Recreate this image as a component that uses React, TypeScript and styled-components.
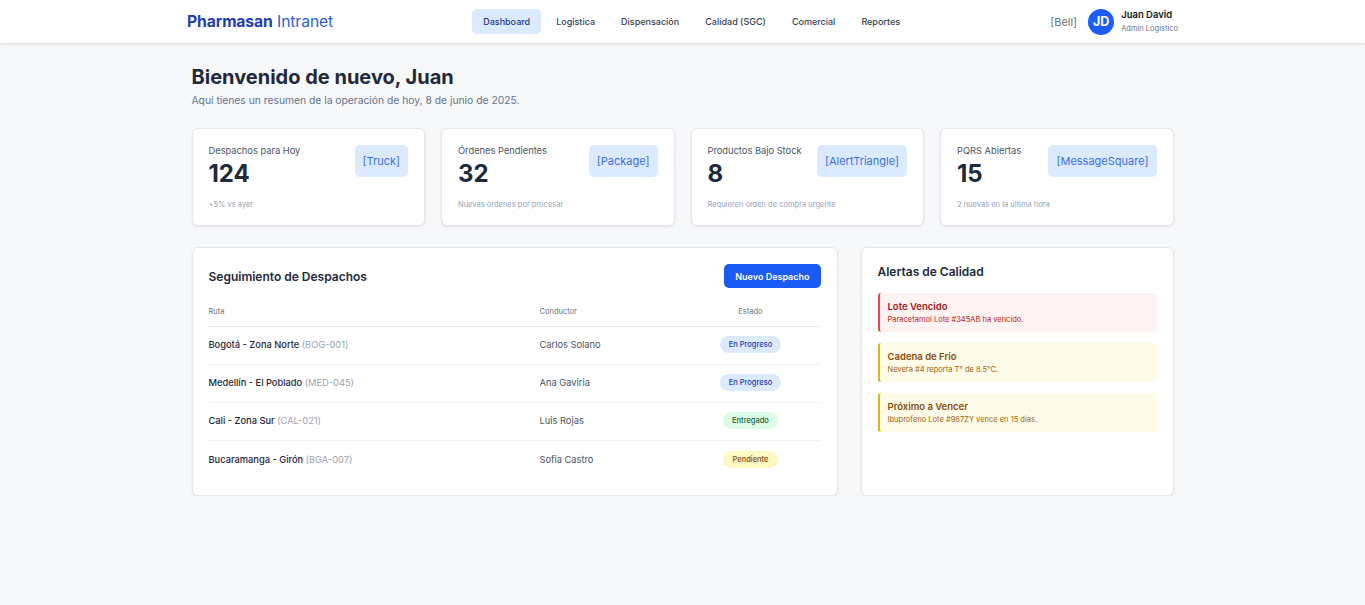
import React from "react";
import styled, { createGlobalStyle } from "styled-components";

const Global = createGlobalStyle`
  * { box-sizing: border-box; }
  body { margin: 0; background: #f7f8fa; font-family: Inter, "Noto Sans", sans-serif; color: #1e293b; }
`;

const Header = styled.header`
  height: 43px;
  background: #fff;
  box-shadow: 0 1px 3px rgba(0,0,0,0.12);
  display: flex;
  justify-content: center;
`;
const HeaderInner = styled.div`
  width: 991px;
  display: flex;
  align-items: center;
  justify-content: space-between;
`;
const Logo = styled.div`
  font-size: 15.7px;
  color: #1e40af;
  letter-spacing: -0.1px;
  b { font-weight: 700; }
  span { font-weight: 400; color: #2f5fd0; }
`;
const Nav = styled.nav`
  display: flex;
  gap: 4px;
`;
const NavItem = styled.a<{ $active?: boolean }>`
  font-size: 9px;
  font-weight: 500;
  padding: 7px 11px;
  border-radius: 5px;
  color: ${(p) => (p.$active ? "#1e3a8a" : "#374151")};
  background: ${(p) => (p.$active ? "#dbeafe" : "transparent")};
`;
const Right = styled.div`
  display: flex;
  align-items: center;
  gap: 11px;
`;
const Bell = styled.span`
  font-size: 11px;
  color: #6b7280;
`;
const User = styled.div`
  display: flex;
  align-items: center;
  gap: 7px;
`;
const Avatar = styled.div`
  width: 26px;
  height: 26px;
  border-radius: 50%;
  background: #1d5cf5;
  color: #fff;
  font-weight: 700;
  font-size: 12.5px;
  display: flex;
  align-items: center;
  justify-content: center;
`;
const UserText = styled.div`
  display: flex;
  flex-direction: column;
  margin-top: -1px;
  b { font-size: 9.5px; font-weight: 600; color: #111827; line-height: 14px; }
  span { font-size: 7.5px; color: #6b7280; line-height: 12px; margin-top: 1px; }
`;

const Main = styled.main`
  width: 982px;
  margin: 0 auto;
  padding-top: 20px;
`;
const Title = styled.h1`
  margin: 0;
  font-size: 20px;
  font-weight: 700;
  line-height: 28px;
  color: #1e293b;
`;
const Subtitle = styled.p`
  margin: 3px 0 0;
  font-size: 10.3px;
  color: #64748b;
`;
const StatsGrid = styled.div`
  margin-top: 22px;
  display: grid;
  grid-template-columns: repeat(4, 1fr);
  gap: 16px;
`;
const Card = styled.div`
  background: #fff;
  border: 1px solid #e5e7eb;
  border-radius: 6px;
  box-shadow: 0 1px 3px rgba(0,0,0,0.08);
  padding: 16px;
`;
const StatTop = styled.div`
  display: flex;
  justify-content: space-between;
  align-items: flex-start;
`;
const StatLabel = styled.div`
  font-size: 9.3px;
  color: #4b5563;
`;
const StatValue = styled.div`
  font-size: 24px;
  font-weight: 700;
  color: #1e293b;
  line-height: 30px;
  margin-top: 3px;
`;
const IconBox = styled.div`
  background: #dbeafe;
  color: #3b6fe8;
  font-size: 11px;
  border-radius: 5px;
  padding: 0 8px;
  height: 32px;
  display: flex;
  align-items: center;
`;
const StatSub = styled.div`
  font-size: 7.5px;
  color: #94a3b8;
  margin-top: 11px;
`;

const Lower = styled.div`
  margin-top: 21px;
  display: grid;
  grid-template-columns: 646px minmax(0, 1fr);
  gap: 23px;
`;
const PanelHead = styled.div`
  display: flex;
  justify-content: space-between;
  align-items: center;
`;
const PanelTitle = styled.h2`
  margin: 0;
  font-size: 12px;
  font-weight: 600;
  color: #1e293b;
`;
const Button = styled.button`
  background: #1a5af5;
  color: #fff;
  border: none;
  border-radius: 5px;
  font-family: inherit;
  font-size: 9px;
  font-weight: 600;
  height: 24px;
  padding: 0 11px;
`;
const Table = styled.div`
  margin-top: 16px;
`;
const Row = styled.div<{ $head?: boolean }>`
  display: grid;
  grid-template-columns: 331px 141px 1fr;
  align-items: center;
  height: ${(p) => (p.$head ? "23px" : "38px")};
  padding-bottom: ${(p) => (p.$head ? "0" : "2px")};
  border-bottom: 1px solid ${(p) => (p.$head ? "#e2e8f0" : "#f1f3f5")};
  &:last-child { border-bottom: none; }
`;
const HeadCell = styled.div<{ $center?: boolean }>`
  font-size: 7.5px;
  color: #6b7280;
  text-align: ${(p) => (p.$center ? "center" : "left")};
  padding-bottom: 7px;
`;
const RouteCell = styled.div`
  font-size: 9.3px;
  font-weight: 500;
  color: #1e293b;
  span { color: #9ca3af; font-weight: 400; }
`;
const DriverCell = styled.div`
  font-size: 9.3px;
  color: #4b5563;
`;
const BadgeCell = styled.div`
  display: flex;
  justify-content: center;
`;
const badgeColors: Record<string, [string, string]> = {
  blue: ["#dbeafe", "#1e40af"],
  green: ["#dcfce7", "#166534"],
  yellow: ["#fef9c3", "#854d0e"],
};
const Badge = styled.span<{ $tone: string }>`
  font-size: 7.5px;
  font-weight: 500;
  padding: 4px 9px;
  border-radius: 999px;
  background: ${(p) => badgeColors[p.$tone][0]};
  color: ${(p) => badgeColors[p.$tone][1]};
`;

const AlertList = styled.div`
  margin-top: 14px;
  display: flex;
  flex-direction: column;
  gap: 11px;
`;
const alertColors: Record<string, [string, string, string, string]> = {
  red: ["#fef2f2", "#ef4444", "#991b1b", "#b91c1c"],
  yellow: ["#fefce8", "#eab308", "#854d0e", "#a16207"],
};
const Alert = styled.div<{ $tone: string }>`
  background: ${(p) => alertColors[p.$tone][0]};
  border-left: 2px solid ${(p) => alertColors[p.$tone][1]};
  border-radius: 3px;
  padding: 8px 8px;
  height: 39px;
  b { display: block; font-size: 9.5px; font-weight: 600; color: ${(p) => alertColors[p.$tone][2]}; }
  span { display: block; font-size: 7.5px; color: ${(p) => alertColors[p.$tone][3]}; margin-top: 3px; }
`;

const stats = [
  { label: "Despachos para Hoy", value: "124", icon: "[Truck]", sub: "+5% vs ayer" },
  { label: "Órdenes Pendientes", value: "32", icon: "[Package]", sub: "Nuevas órdenes por procesar" },
  { label: "Productos Bajo Stock", value: "8", icon: "[AlertTriangle]", sub: "Requieren orden de compra urgente" },
  { label: "PQRS Abiertas", value: "15", icon: "[MessageSquare]", sub: "2 nuevas en la última hora" },
];

const rows = [
  { route: "Bogotá - Zona Norte", code: "(BOG-001)", driver: "Carlos Solano", status: "En Progreso", tone: "blue" },
  { route: "Medellín - El Poblado", code: "(MED-045)", driver: "Ana Gaviria", status: "En Progreso", tone: "blue" },
  { route: "Cali - Zona Sur", code: "(CAL-021)", driver: "Luis Rojas", status: "Entregado", tone: "green" },
  { route: "Bucaramanga - Girón", code: "(BGA-007)", driver: "Sofia Castro", status: "Pendiente", tone: "yellow" },
];

const alerts = [
  { title: "Lote Vencido", text: "Paracetamol Lote #345AB ha vencido.", tone: "red" },
  { title: "Cadena de Frío", text: "Nevera #4 reporta T° de 8.5°C.", tone: "yellow" },
  { title: "Próximo a Vencer", text: "Ibuprofeno Lote #987ZY vence en 15 días.", tone: "yellow" },
];

export default function App() {
  return (
    <>
      <Global />
      <Header>
        <HeaderInner>
          <Logo><b>Pharmasan</b> <span>Intranet</span></Logo>
          <Nav>
            <NavItem $active>Dashboard</NavItem>
            <NavItem>Logistica</NavItem>
            <NavItem>Dispensación</NavItem>
            <NavItem>Calidad (SGC)</NavItem>
            <NavItem>Comercial</NavItem>
            <NavItem>Reportes</NavItem>
          </Nav>
          <Right>
            <Bell>[Bell]</Bell>
            <User>
              <Avatar>JD</Avatar>
              <UserText>
                <b>Juan David</b>
                <span>Admin Logistico</span>
              </UserText>
            </User>
          </Right>
        </HeaderInner>
      </Header>
      <Main>
        <Title>Bienvenido de nuevo, Juan</Title>
        <Subtitle>Aquí tienes un resumen de la operación de hoy, 8 de junio de 2025.</Subtitle>
        <StatsGrid>
          {stats.map((s) => (
            <Card key={s.label}>
              <StatTop>
                <div>
                  <StatLabel>{s.label}</StatLabel>
                  <StatValue>{s.value}</StatValue>
                </div>
                <IconBox>{s.icon}</IconBox>
              </StatTop>
              <StatSub>{s.sub}</StatSub>
            </Card>
          ))}
        </StatsGrid>
        <Lower>
          <Card>
            <PanelHead>
              <PanelTitle>Seguimiento de Despachos</PanelTitle>
              <Button>Nuevo Despacho</Button>
            </PanelHead>
            <Table>
              <Row $head>
                <HeadCell>Ruta</HeadCell>
                <HeadCell>Conductor</HeadCell>
                <HeadCell $center>Estado</HeadCell>
              </Row>
              {rows.map((r) => (
                <Row key={r.route}>
                  <RouteCell>{r.route} <span>{r.code}</span></RouteCell>
                  <DriverCell>{r.driver}</DriverCell>
                  <BadgeCell><Badge $tone={r.tone}>{r.status}</Badge></BadgeCell>
                </Row>
              ))}
            </Table>
          </Card>
          <Card>
            <PanelTitle>Alertas de Calidad</PanelTitle>
            <AlertList>
              {alerts.map((a) => (
                <Alert key={a.title} $tone={a.tone}>
                  <b>{a.title}</b>
                  <span>{a.text}</span>
                </Alert>
              ))}
            </AlertList>
          </Card>
        </Lower>
      </Main>
    </>
  );
}
